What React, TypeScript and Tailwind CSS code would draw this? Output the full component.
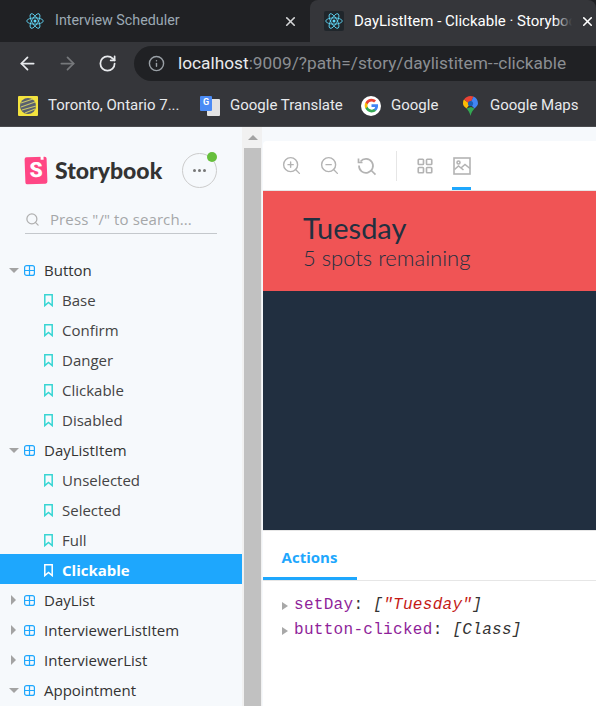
import { LayoutGrid, Search, ZoomIn, ZoomOut, Info, ArrowLeft, ArrowRight, RotateCw, X } from 'lucide-react';

const ui = "font-['Roboto',sans-serif]";

function ReactIcon() {
  return (
    <svg width="18" height="18" viewBox="-12 -12 24 24" fill="none" stroke="#61dafb" strokeWidth="1.1">
      <circle r="2" fill="#61dafb" stroke="none" />
      <ellipse rx="11" ry="4.2" />
      <ellipse rx="11" ry="4.2" transform="rotate(60)" />
      <ellipse rx="11" ry="4.2" transform="rotate(120)" />
    </svg>
  );
}

function GoogleIcon() {
  return (
    <div className="flex h-5 w-5 items-center justify-center rounded-full bg-white">
      <svg width="15" height="15" viewBox="0 0 24 24">
        <path fill="#4285f4" d="M22.5 12.2c0-.8-.1-1.500-.2-2.200H12v4.200h5.900c-.3 1.400-1 2.500-2.200 3.300v2.700h3.500c2.100-1.900 3.300-4.700 3.300-8z" />
        <path fill="#34a853" d="M12 23c3 0 5.400-1 7.200-2.700l-3.500-2.700c-1 .7-2.200 1-3.700 1-2.800 0-5.200-1.900-6.100-4.500H2.300v2.800C4.100 20.500 7.800 23 12 23z" />
        <path fill="#fbbc05" d="M5.900 14.100c-.5-1.400-.5-2.800 0-4.200V7.100H2.300a11 11 0 0 0 0 9.800z" />
        <path fill="#ea4335" d="M12 5.400c1.600 0 3 .5 4.100 1.600l3.100-3.100C17.400 2.100 14.900 1 12 1 7.800 1 4.100 3.500 2.300 7.100l3.600 2.800C6.800 7.300 9.200 5.400 12 5.400z" />
      </svg>
    </div>
  );
}

function MapsIcon() {
  return (
    <svg width="15" height="20" viewBox="0 0 15 20">
      <path fill="#34a853" d="M3.500 12.500C5.500 15 7 17 7.500 20c.5-3 2-5 4-7.500L8 11z" />
      <path fill="#fbbc05" d="M1 3.500C.2 4.500 0 6 0 7.500c0 2 1.500 3.500 3.500 5L7 8z" />
      <path fill="#ea4335" d="M7.500 0C5 0 2.500 1.200 1 3.500L7 8l3.500-7.400C9.500.2 8.500 0 7.500 0z" />
      <path fill="#4285f4" d="M10.500.6 7 8l4.500 4.500c1.800-2 3.500-3 3.500-5 0-3.300-2-6-4.500-6.900z" />
      <circle cx="7.500" cy="7.500" r="2.600" fill="#1a5fb4" />
    </svg>
  );
}

function TranslateIcon() {
  return (
    <div className="relative h-5 w-5">
      <div className="absolute right-0 bottom-0 h-[17px] w-[13px] rounded-[1px] bg-[#e3e3e3]" />
      <div className="absolute top-0 left-0 flex h-[15px] w-[12px] items-center justify-center rounded-[1px] bg-[#4b8bf5] text-[9px] font-bold text-white">G</div>
    </div>
  );
}

function TorontoIcon() {
  return (
    <svg width="20" height="20" viewBox="0 0 20 20">
      <rect width="20" height="20" rx="1" fill="#f3e33e" />
      <circle cx="10" cy="10" r="8" fill="#59606f" />
      <path d="M3 7 15 3M3 11 17 6M4 14 18 10M7 17 17 13" stroke="#c9c76a" strokeWidth="1.100" />
    </svg>
  );
}

function BookmarkIcon({ className }: { className: string }) {
  return (
    <svg className={className} width="9" height="13" viewBox="0 0 9 13" fill="none" stroke="currentColor" strokeWidth="1.500">
      <path d="M.8.8h7.400v10.800L4.500 8.500.8 11.600z" />
    </svg>
  );
}

function ResetZoomIcon() {
  return (
    <svg width="20" height="20" viewBox="0 0 20 20" fill="none" stroke="currentColor" strokeWidth="1.700">
      <path d="M3.500 5.500A7 7 0 1 1 2 9.500" />
      <path d="M1.500 2.500v4h4" />
      <path d="m13.800 14 4.700 4.700" />
    </svg>
  );
}

function ImageIcon() {
  return (
    <svg width="18" height="18" viewBox="0 0 18 18" fill="none" stroke="currentColor" strokeWidth="1.600">
      <rect x="1" y="1" width="16" height="16" />
      <circle cx="5.500" cy="5.500" r="1.500" />
      <path d="m1.500 12.500 4-3.500 5 4M8.500 10.500l3.500-3 5 4" />
    </svg>
  );
}

function Chevron({ open }: { open: boolean }) {
  return open ? (
    <span className="ml-[9px] h-0 w-0 border-x-[5px] border-t-[5px] border-x-transparent border-t-[#a3a3a3]" />
  ) : (
    <span className="ml-[11px] mr-[3px] h-0 w-0 border-y-[5px] border-l-[5px] border-y-transparent border-l-[#a3a3a3]" />
  );
}

function ComponentRow({ label, open }: { label: string; open: boolean }) {
  return (
    <div className="flex h-[30px] items-center pt-[2px] text-[15px] text-[#333]">
      <Chevron open={open} />
      <svg className="ml-[5px]" width="11" height="11" viewBox="0 0 11 11" fill="none" stroke="#1ea7fd" strokeWidth="1.200">
        <rect x="0.600" y="0.600" width="9.800" height="9.800" rx="2" />
        <path d="M5.500 .6v9.800M.6 5.500h9.800" />
      </svg>
      <span className="ml-[9px] leading-none">{label}</span>
    </div>
  );
}

function StoryRow({ label, selected }: { label: string; selected?: boolean }) {
  return (
    <div className={selected ? 'flex h-[30px] items-center bg-[#1ea7fd] pt-[2px] pl-[44px] text-[15px] font-bold text-white' : 'flex h-[30px] items-center pt-[2px] pl-[44px] text-[15px] text-[#444]'}>
      <BookmarkIcon className={selected ? 'text-white' : 'text-[#37d5d3]'} />
      <span className="ml-[9px] leading-none">{label}</span>
    </div>
  );
}

export default function App() {
  return (
    <div className="flex h-[706px] w-[596px] flex-col overflow-hidden bg-[#f6f9fc]">
      {/* tabs */}
      <div className={`flex h-[42px] shrink-0 bg-[#202124] ${ui}`}>
        <div className="flex w-[310px] items-center pl-[26px] text-[14.300px] text-[#9ca9b4]">
          <ReactIcon />
          <span className="ml-[11px]">Interview Scheduler</span>
          <X size={15} strokeWidth={2.600} className="ml-auto mr-[12px] text-[#d5d6d8]" />
        </div>
        <div className="flex flex-1 items-center overflow-hidden rounded-t-lg bg-[#35363a] pl-[14px] text-[15px] text-white">
          <div className="flex h-5 w-5 shrink-0 items-center justify-center rounded-[2px] bg-[#20262b]">
            <ReactIcon />
          </div>
          <div className="relative ml-[10px] w-[218px] shrink-0 overflow-hidden whitespace-nowrap">
            DayListItem - Clickable · Storybook
            <span className="absolute inset-y-0 right-0 w-[18px] bg-gradient-to-r from-transparent to-[#35363a]" />
          </div>
          <X size={15} strokeWidth={2.600} className="ml-[8px] shrink-0 text-white" />
        </div>
      </div>

      {/* address bar */}
      <div className="flex h-[43px] shrink-0 items-center bg-[#35363a] pl-[17px]">
        <ArrowLeft size={21} strokeWidth={2} className="text-[#e8eaed]" />
        <ArrowRight size={21} strokeWidth={2} className="ml-[19px] text-[#76787b]" />
        <RotateCw size={19} strokeWidth={2.200} className="ml-[20px] text-[#e8eaed]" />
        <div className={`ml-[17px] flex h-[35px] flex-1 items-center rounded-l-full bg-[#202124] pl-[14px] ${ui} text-[17.300px]`}>
          <Info size={17} className="text-[#9aa0a6]" />
          <span className="ml-[13px] whitespace-nowrap text-[#e8eaed]">localhost<span className="text-[#8b8e92]">:9009/?path=/story/daylistitem-<span className="ml-px">-</span>clickable</span></span>
        </div>
      </div>

      {/* bookmarks */}
      <div className={`flex h-[42px] shrink-0 items-center border-b border-[#4a4b4e] bg-[#35363a] pl-[18px] ${ui} text-[15px] text-[#e8eaed] whitespace-nowrap`}>
        <TorontoIcon />
        <span className="ml-[10px] w-[132px] shrink-0">Toronto, Ontario 7...</span>
        <div className="ml-[20px]"><TranslateIcon /></div>
        <span className="ml-[10px] w-[111px] shrink-0">Google Translate</span>
        <div className="ml-[20px]"><GoogleIcon /></div>
        <span className="ml-[10px] w-[48px] shrink-0">Google</span>
        <div className="ml-[24px]"><MapsIcon /></div>
        <span className="ml-[12px]">Google Maps</span>
      </div>

      <div className="flex min-h-0 flex-1">
        {/* sidebar */}
        <div className="flex w-[242px] shrink-0 flex-col font-['Open_Sans',sans-serif]">
          <div className="flex h-[80px] shrink-0 items-center pl-[25px] pt-[6px]">
            <div className="relative flex h-[27px] w-[22px] -rotate-2 items-center justify-center rounded-[2px] bg-[#ff4785] font-['Roboto',sans-serif] text-[21px] font-black text-white">
              S
              <span className="absolute -top-px right-[3px] h-[4px] w-[3px] bg-white" />
            </div>
            <span className="ml-[8px] font-['Lato',sans-serif] text-[23px] leading-none font-black text-[#333]">Storybook</span>
            <div className="relative ml-[20px] flex h-[35px] w-[35px] items-center justify-center gap-[2px] rounded-full border border-[#ccc]">
              <span className="h-[3px] w-[3px] rounded-full bg-[#777]" />
              <span className="h-[3px] w-[3px] rounded-full bg-[#777]" />
              <span className="h-[3px] w-[3px] rounded-full bg-[#777]" />
              <span className="absolute -top-[2px] -right-[1px] h-[10px] w-[10px] rounded-full bg-[#66bf3c]" />
            </div>
          </div>
          <div className="mx-[25px] flex h-[27px] shrink-0 items-center border-b border-[#c4c8cc] pb-[2px] text-[15px] text-[#a5a7a9]">
            <Search size={15} className="text-[#b0b0b0]" />
            <span className="ml-[10px] leading-none tracking-[0.100px]">Press "/" to search...</span>
          </div>
          <div className="pt-[20px]">
            <ComponentRow label="Button" open />
            <StoryRow label="Base" />
            <StoryRow label="Confirm" />
            <StoryRow label="Danger" />
            <StoryRow label="Clickable" />
            <StoryRow label="Disabled" />
            <ComponentRow label="DayListItem" open />
            <StoryRow label="Unselected" />
            <StoryRow label="Selected" />
            <StoryRow label="Full" />
            <StoryRow label="Clickable" selected />
            <ComponentRow label="DayList" open={false} />
            <ComponentRow label="InterviewerListItem" open={false} />
            <ComponentRow label="InterviewerList" open={false} />
            <ComponentRow label="Appointment" open />
          </div>
        </div>

        {/* scrollbar */}
        <div className="flex w-[20px] shrink-0 flex-col bg-[#f1f1f1] pl-[2px]">
          <div className="flex h-[21px] justify-center pt-[8px]">
            <span className="h-0 w-0 border-x-[5px] border-b-[5px] border-x-transparent border-b-[#a3a3a3]" />
          </div>
          <div className="w-[17px] flex-1 bg-[#c1c1c1]" />
        </div>

        {/* preview */}
        <div className="ml-px flex min-w-0 flex-1 flex-col pt-[14px]">
          <div className="flex h-[50px] shrink-0 items-center rounded-tl-[4px] border-b border-[#e6e6e6] bg-white pl-[18px] text-[#b3b3b3]">
            <ZoomIn size={21} strokeWidth={1.600} />
            <ZoomOut size={21} strokeWidth={1.600} className="ml-[17px]" />
            <div className="ml-[17px]"><ResetZoomIcon /></div>
            <div className="ml-[19px] h-[30px] w-px bg-[#e6e6e6]" />
            <LayoutGrid size={18} strokeWidth={2.200} className="ml-[19px]" />
            <div className="relative ml-[18px] flex h-full w-[19px] items-center justify-center">
              <ImageIcon />
              <span className="absolute bottom-0 left-0 h-[3px] w-[19px] bg-[#1ea7fd]" />
            </div>
          </div>
          <div className="flex h-[100px] shrink-0 flex-col bg-[#f05455] pl-[40px] pt-[19px] font-['Lato',sans-serif] text-[#223040]">
            <span className="text-[29px] leading-[36px] font-normal">Tuesday</span>
            <span className="text-[22px] leading-[24px] font-light">5 spots remaining</span>
          </div>
          <div className="h-[239px] shrink-0 bg-[#212f40]" />
          <div className="flex-1 border-t border-[#e6e6e6] bg-white">
            <div className="flex h-[50px] border-b border-[#e6e6e6]">
              <div className="flex w-[94px] items-center justify-center border-b-[3px] border-[#1ea7fd] pt-[7px] pr-[1px] font-['Open_Sans',sans-serif] text-[15px] font-bold text-[#1ea7fd]">Actions</div>
            </div>
            <div className="pt-[12px] pl-[19px] font-['Liberation_Mono',monospace] text-[16px] leading-[25px] tracking-[0.300px]">
              <div className="flex items-center">
                <span className="h-0 w-0 border-y-[4px] border-l-[6px] border-y-transparent border-l-[#a8a8a8]" />
                <span className="ml-[6px] whitespace-nowrap text-[#8f1f9a]">setDay<span className="text-[#333]">: </span><i className="text-[#333]">[<span className="text-[#c41a16]">"Tuesday"</span>]</i></span>
              </div>
              <div className="flex items-center">
                <span className="h-0 w-0 border-y-[4px] border-l-[6px] border-y-transparent border-l-[#a8a8a8]" />
                <span className="ml-[6px] whitespace-nowrap text-[#8f1f9a]">button-clicked<span className="text-[#333]">: </span><i className="text-[#333]">[Class]</i></span>
              </div>
            </div>
          </div>
        </div>
      </div>
    </div>
  );
}
